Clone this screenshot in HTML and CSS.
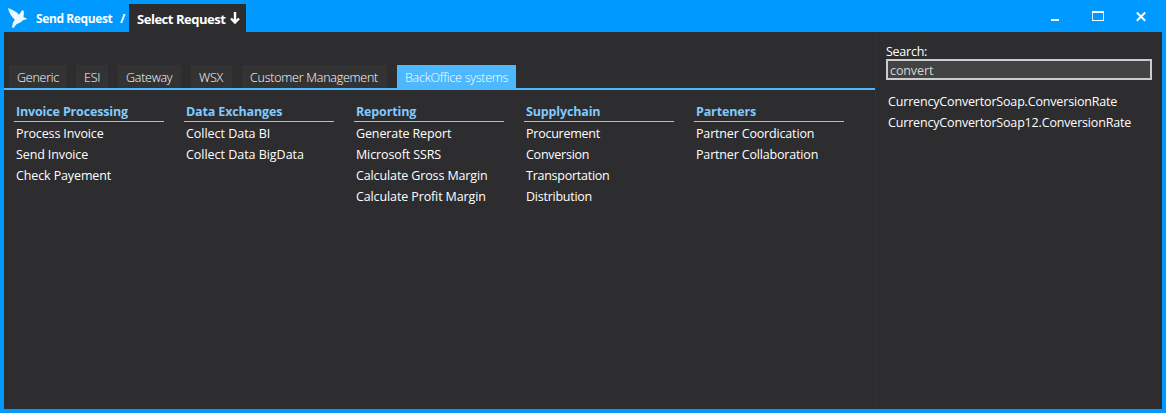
FILE: index.html
```html
<!DOCTYPE html>
<html lang="en">
<head>
<meta charset="utf-8">
<title>Select Request</title>
<link rel="stylesheet" href="styles.css">
</head>
<body>
<div class="window">
  <header class="titlebar">
    <svg class="logo" width="20" height="20" viewBox="0 0 20 20"><path d="M0 0C4 1.500 8.500 3.500 11 6.800C12.500 5 13 3 14.500 2.200C16 2 16 4 15.700 6.500L15.500 9L19.500 11L15 12.300C13 14.700 10.500 15.200 8.200 16.500L5.500 20L4 19.600L5 14.500L6.800 11.800C3.500 8.500 1 5 0 0Z" fill="#eef8ff"/></svg>
    <span class="crumb">Send Request</span>
    <span class="slash">/</span>
    <div class="current"><span class="current-label">Select Request</span>
      <svg width="10" height="13" viewBox="0 0 10 13"><path d="M5 0V11M1 6.500L5 10.500L9 6.500" fill="none" stroke="#fff" stroke-width="2.400"/></svg>
    </div>
    <div class="controls">
      <svg width="8" height="12" viewBox="0 0 8 12"><path d="M0 8h8v2H0z" fill="#fff"/></svg>
      <svg width="12" height="12" viewBox="0 0 12 12"><path d="M.5 1V9.500H11.500V1" fill="none" stroke="#d5edff"/><path d="M0 0h12v2H0zM0 9h12v1H0z" fill="#fff"/></svg>
      <svg width="10" height="12" viewBox="0 0 10 12"><path d="M.8 1.500L9.200 9.700M9.200 1.500L.8 9.700" stroke="#fff" stroke-width="2"/></svg>
    </div>
  </header>
  <div class="content">
    <main class="main">
      <nav class="tabs">
        <div class="tab t1">Generic</div><div class="tab t2">ESI</div><div class="tab t3">Gateway</div><div class="tab t4">WSX</div><div class="tab t5">Customer Management</div><div class="tab t6 active">BackOffice systems</div>
      </nav>
      <div class="groups">
        <section class="group"><h2>Invoice Processing</h2><ul><li>Process Invoice</li><li>Send Invoice</li><li>Check Payement</li></ul></section>
        <section class="group data"><h2>Data Exchanges</h2><ul><li>Collect Data BI</li><li>Collect Data BigData</li></ul></section>
        <section class="group"><h2>Reporting</h2><ul><li>Generate Report</li><li>Microsoft SSRS</li><li>Calculate Gross Margin</li><li>Calculate Profit Margin</li></ul></section>
        <section class="group supply"><h2>Supplychain</h2><ul><li>Procurement</li><li>Conversion</li><li>Transportation</li><li>Distribution</li></ul></section>
        <section class="group partners"><h2>Parteners</h2><ul><li>Partner Coordication</li><li>Partner Collaboration</li></ul></section>
      </div>
    </main>
    <aside class="search">
      <div class="label">Search:</div>
      <div class="field">convert</div>
      <ul class="results"><li>CurrencyConvertorSoap.ConversionRate</li><li>CurrencyConvertorSoap12.ConversionRate</li></ul>
    </aside>
  </div>
</div>
</body>
</html>
```
FILE: styles.css
```css
* { box-sizing: border-box; }
body { margin: 0; font: 12.5px/21px "Open Sans", "Noto Sans", sans-serif; color: #fff; white-space: nowrap; }
svg { display: block; flex: none; }
ul { list-style: none; margin: 0; padding: 0; }
.window { width: 1166px; height: 413px; padding: 0 4px 4px; background: #0099ff; display: flex; flex-direction: column; }
.titlebar { height: 32px; display: flex; padding-left: 4px; font-weight: 700; }
.logo { margin-top: 8px; }
.crumb { margin-left: 8px; width: 77px; padding-top: 8px; font-size: 12px; letter-spacing: -0.4px; }
.slash { margin-left: 7px; width: 9px; padding-top: 8px; font-size: 13px; }
.current { margin-top: 4px; width: 117px; background: #2d2d30; display: flex; padding: 5px 0 0 8px; font-size: 13px; letter-spacing: -0.47px; }
.current-label { width: 93px; }
.current svg { margin-top: 3px; }
.controls { margin-left: auto; display: flex; padding: 11px 16px 0 0; }
.controls svg + svg { margin-left: 33px; }
.controls svg:last-child { margin-left: 32px; }
.content { flex: 1; display: flex; background: #2d2d30; }
.main { width: 871px; }
.tabs { height: 58px; padding: 33px 0 0 5px; display: flex; gap: 10px; border-bottom: 2px solid #4db8ff; }
.tab { background: #333; padding-left: 8px; line-height: 25px; font-weight: 300; height: 23px; color: #fff; letter-spacing: -0.25px; }
.t1 { width: 57px; } .t2 { width: 32px; } .t3 { width: 63px; } .t4 { width: 41px; } .t5 { width: 145px; } .t6 { width: 119px; }
.active { background: #4db8ff; }
.groups { display: flex; gap: 20px; padding: 11px 0 0 10px; }
.group { width: 150px; letter-spacing: -0.12px; }
.group h2 { margin: 0 0 1px; height: 21px; padding-left: 2px; font-size: 12.5px; line-height: 21px; letter-spacing: -0.15px; color: #80caff; border-bottom: 1px solid #80caff; }
.group li { padding-left: 2px; }
.data { letter-spacing: -0.03px; }
.supply { letter-spacing: -0.25px; }
.partners { letter-spacing: -0.17px; }
.search { flex: 1; border-left: 1px solid #333337; padding: 9px 10px 0; }
.label { height: 18px; line-height: 21px; letter-spacing: -0.25px; }
.field { height: 21px; border: 2px solid #ccc; background: #434343; color: #d4d4d4; padding-left: 2px; line-height: 19px; letter-spacing: -0.1px; }
.results { padding: 11px 0 0 2px; letter-spacing: -0.17px; }
```
